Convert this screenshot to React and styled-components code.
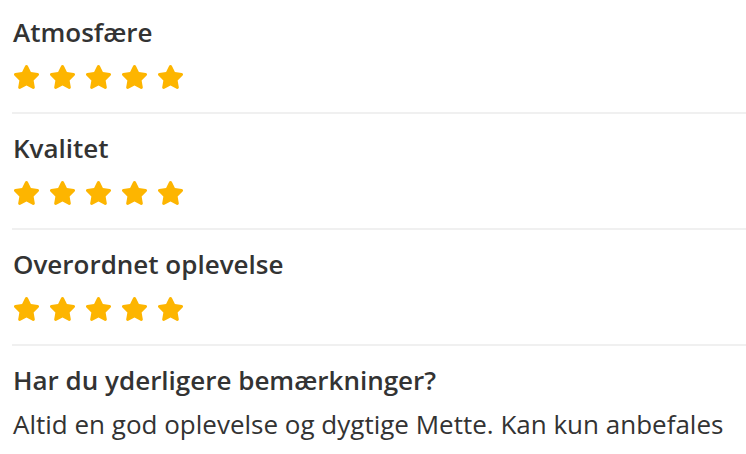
import React from "react";
import styled, { createGlobalStyle } from "styled-components";
import { FaStar } from "react-icons/fa";

const GlobalStyle = createGlobalStyle`
  body {
    margin: 0;
    background: #ffffff;
    font-family: "Open Sans", "Liberation Sans", sans-serif;
    color: #333333;
  }
`;

const Page = styled.div`
  padding: 0 0 0 12px;
`;

// one rating block
const Section = styled.div`
  padding: 16px 0 23px 1px;
  border-bottom: 2px solid #f0f0f0;

  &:first-child {
    padding-top: 14px;
  }
`;

const Title = styled.h3`
  margin: 0 0 15px;
  font-size: 26px;
  font-weight: 600;
  line-height: 36px;
  color: #333333;
`;

const Stars = styled.div`
  display: flex;
  gap: 9px;
  height: 24px;
  align-items: center;
  color: #fdb500;

  svg {
    width: 27px;
    height: 24px;
  }
`;

const Remarks = styled.div`
  padding: 16px 0 0 1px;
`;

const Question = styled.h4`
  margin: 0 0 8px;
  font-size: 26px;
  font-weight: 600;
  line-height: 36px;
  color: #333333;
`;

const Answer = styled.p`
  margin: 0;
  font-size: 26px;
  line-height: 36px;
  color: #333333;
`;

const ratings = ["Atmosfære", "Kvalitet", "Overordnet oplevelse"];

const Rating = ({ label, value }) => (
  <Section>
    <Title>{label}</Title>
    <Stars>
      {Array.from({ length: value }).map((_, i) => (
        <FaStar key={i} />
      ))}
    </Stars>
  </Section>
);

const App = () => {
  return (
    <>
      <GlobalStyle />
      <Page>
        {ratings.map((r) => (
          <Rating key={r} label={r} value={5} />
        ))}
        <Remarks>
          <Question>Har du yderligere bemærkninger?</Question>
          <Answer>Altid en god oplevelse og dygtige Mette. Kan kun anbefales</Answer>
        </Remarks>
      </Page>
    </>
  );
};

export default App;
